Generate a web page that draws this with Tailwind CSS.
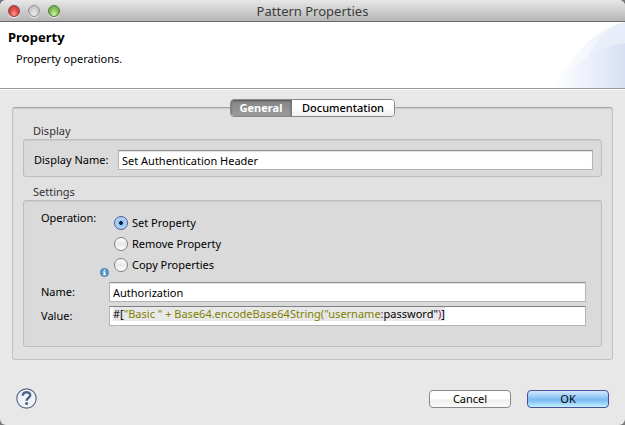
<!DOCTYPE html>
<html lang="en">
<head>
<meta charset="utf-8">
<title>Pattern Properties</title>
<script src="https://cdn.jsdelivr.net/npm/@tailwindcss/browser@4"></script>
</head>
<body class="bg-[#777] font-['Noto_Sans','Open_Sans',sans-serif] text-[11px] leading-4 text-black">
<div class="flex min-h-screen flex-col overflow-hidden rounded-md bg-[#e8e8e8]">
  <header class="relative flex h-[22px] items-center justify-center border-b border-[#696969] bg-linear-to-b from-[#e8e8e8] to-[#b5b5b5]">
    <div class="absolute left-2 flex gap-2">
      <button type="button" aria-label="Close" class="size-3 rounded-full border border-[#8b4440] bg-radial-[at_50%_85%] from-[#ff9a90] via-[#e34a48] to-[#b93937] shadow-[0_1px_0_#eee]"></button>
      <button type="button" aria-label="Minimize" class="size-3 rounded-full border border-[#929292] bg-radial-[at_50%_85%] from-[#ededed] via-[#d0d0d0] to-[#b8b8b8] shadow-[0_1px_0_#eee]"></button>
      <button type="button" aria-label="Zoom" class="size-3 rounded-full border border-[#547a3c] bg-radial-[at_50%_85%] from-[#d2f5a5] via-[#87c45c] to-[#5f9c43] shadow-[0_1px_0_#eee]"></button>
    </div>
    <h1 class="text-[13px] text-[#3c3c3c]">Pattern Properties</h1>
  </header>

  <section class="relative h-[67px] border-b border-[#999] bg-white px-2 pt-[7px]">
    <svg class="absolute right-0 top-0 h-[66px] w-[75px]" viewBox="0 0 75 66" aria-hidden="true">
      <defs>
        <linearGradient id="a" gradientUnits="userSpaceOnUse" x1="0" x2="75" y1="0" y2="0"><stop offset="0" stop-color="#fdfdff"/><stop offset=".35" stop-color="#f7f9fd"/><stop offset="1" stop-color="#eaeffa"/></linearGradient>
        <linearGradient id="b" gradientUnits="userSpaceOnUse" x1="5" x2="75" y1="0" y2="0"><stop offset="0" stop-color="#fdfdff"/><stop offset=".4" stop-color="#eff3fb"/><stop offset="1" stop-color="#d8e1f4"/></linearGradient>
      </defs>
      <path fill="url(#a)" d="M3 66C18 38 43 7 75 0V66Z"/>
      <path fill="#e4ebf9" fill-opacity=".6" d="M36 38C45 20 57 6 75 0V66H36Z"/>
      <path fill="url(#b)" d="M5 66C20 46 43 25 75 21V66Z"/>
    </svg>
    <h2 class="text-[13px] font-bold">Property</h2>
    <p class="mt-1.5 px-2">Property operations.</p>
  </section>

  <main class="border-t border-white px-3 pt-[9px]">
    <div role="tablist" class="relative z-10 mx-auto flex h-[18px] w-[165px] overflow-hidden rounded-sm border border-[#888] bg-white">
      <button type="button" role="tab" aria-selected="true" class="flex w-[61px] items-center justify-center border-r border-[#777] bg-linear-to-b from-[#858585] to-[#9b9b9b] font-bold text-white shadow-[inset_0_1px_2px_#555]">General</button>
      <button type="button" role="tab" aria-selected="false" class="flex flex-1 items-center justify-center bg-linear-to-b from-white from-50% to-[#eee] font-medium">Documentation</button>
    </div>
    <form id="props" class="-mt-[10px] rounded-[3px] border border-[#c2c2c2] border-t-[#a5a5a5] bg-[#e1e1e1] px-[10px] pb-3 pt-[15px] shadow-[inset_0_1px_1px_#ccc]">
      <fieldset>
        <legend class="px-[10px] text-[#333]">Display</legend>
        <div class="flex h-[38px] items-center gap-2 rounded-[3px] border border-[#bdbdbd] bg-[#dadada] pl-[10px] pr-2 pt-1 shadow-[inset_0_1px_1px_#ccc]">
          <label for="display" class="w-[76px] whitespace-nowrap">Display Name:</label>
          <input id="display" value="Set Authentication Header" class="h-5 min-w-0 flex-1 border border-[#b4b4b4] border-t-[#8f8f8f] bg-white px-[3px] shadow-[inset_0_1px_1px_#e2e2e2] outline-none">
        </div>
      </fieldset>
      <fieldset class="mt-[7px]">
        <legend class="px-[10px] text-[#333]">Settings</legend>
        <div class="rounded-[3px] border border-[#bdbdbd] bg-[#dadada] pb-5 pl-[17px] pr-[15px] pt-[9px] shadow-[inset_0_1px_1px_#ccc]">
          <div class="flex" role="radiogroup" aria-labelledby="op">
            <span id="op" class="w-[59px]">Operation:</span>
            <svg class="-mb-1 mr-[5px] size-[9px] self-end" viewBox="0 0 9 9" aria-hidden="true">
              <circle cx="4.5" cy="4.5" r="4" fill="#5b9bcb" stroke="#397bb0"/>
              <path d="M3.800 1.500h1.400v1.300H3.800zM3 3.500h2.200v2.700H6v1H3v-1h.8V4.500H3z" fill="#fff"/>
            </svg>
            <div class="flex flex-col gap-[5px] pt-[5px]">
              <label class="flex items-center gap-1"><input type="radio" name="op" checked class="size-[14px] appearance-none rounded-full border border-[#777] bg-linear-to-b from-white to-[#e9e9e9] checked:border-[#4a5596] checked:bg-radial-[at_50%_50%] checked:from-[#111a38] checked:from-18% checked:via-[#8fc3f5] checked:via-26% checked:to-[#d2e7fa]">Set Property</label>
              <label class="flex items-center gap-1"><input type="radio" name="op" class="size-[14px] appearance-none rounded-full border border-[#808080] bg-linear-to-b from-white via-[#e9e9e9] to-white">Remove Property</label>
              <label class="flex items-center gap-1"><input type="radio" name="op" class="size-[14px] appearance-none rounded-full border border-[#808080] bg-linear-to-b from-white via-[#e9e9e9] to-white">Copy Properties</label>
            </div>
          </div>
          <div class="mt-[9px] grid grid-cols-[68px_1fr] items-center gap-y-1">
            <label for="name">Name:</label>
            <input id="name" value="Authorization" class="h-5 min-w-0 border border-[#b4b4b4] border-t-[#8f8f8f] bg-white px-[3px] shadow-[inset_0_1px_1px_#e2e2e2] outline-none">
            <span id="value">Value:</span>
            <div role="textbox" aria-labelledby="value" contenteditable="true" spellcheck="false" class="flex h-5 min-w-0 items-start overflow-hidden whitespace-pre border border-[#b4b4b4] border-t-[#808080] bg-white px-[3px] leading-[14px] outline-none"><span class="bg-[#e8e8e8]">#[<span class="text-[#808000]">"Basic " + Base64.encodeBase64String("username</span><span class="text-[#7f2060]">:</span>password"<span class="text-[#7f207f]">)</span>]</span></div>
          </div>
        </div>
      </fieldset>
    </form>
  </main>

  <footer class="flex items-center gap-4 px-4 pt-7">
    <button type="button" aria-label="Help" class="mr-auto size-[21px]">
      <svg viewBox="0 0 21 21" aria-hidden="true">
        <circle cx="10.500" cy="10.500" r="9.700" fill="#f1f3f6" stroke="#5d6c8b" stroke-width="1.200"/>
        <path d="M6.800 7.700C6.800 2.800 14.500 3.200 14.200 7.500C14 9.700 10.600 10 10.600 12.700" fill="none" stroke="#546789" stroke-width="2.500"/>
        <circle cx="10.600" cy="15.500" r="1.600" fill="#546789"/>
      </svg>
    </button>
    <button type="button" class="flex h-[18px] w-[82px] items-center justify-center rounded-sm border border-[#888] bg-linear-to-b from-white from-50% via-[#efefef] via-55% to-[#fafafa]">Cancel</button>
    <button type="submit" form="props" class="flex h-[18px] w-[82px] items-center justify-center rounded-sm border border-[#4a4e9c] bg-linear-to-b from-[#d5e8fa] via-[#79b9f2] via-55% to-[#c4f3ff]">OK</button>
  </footer>
</div>
</body>
</html>
